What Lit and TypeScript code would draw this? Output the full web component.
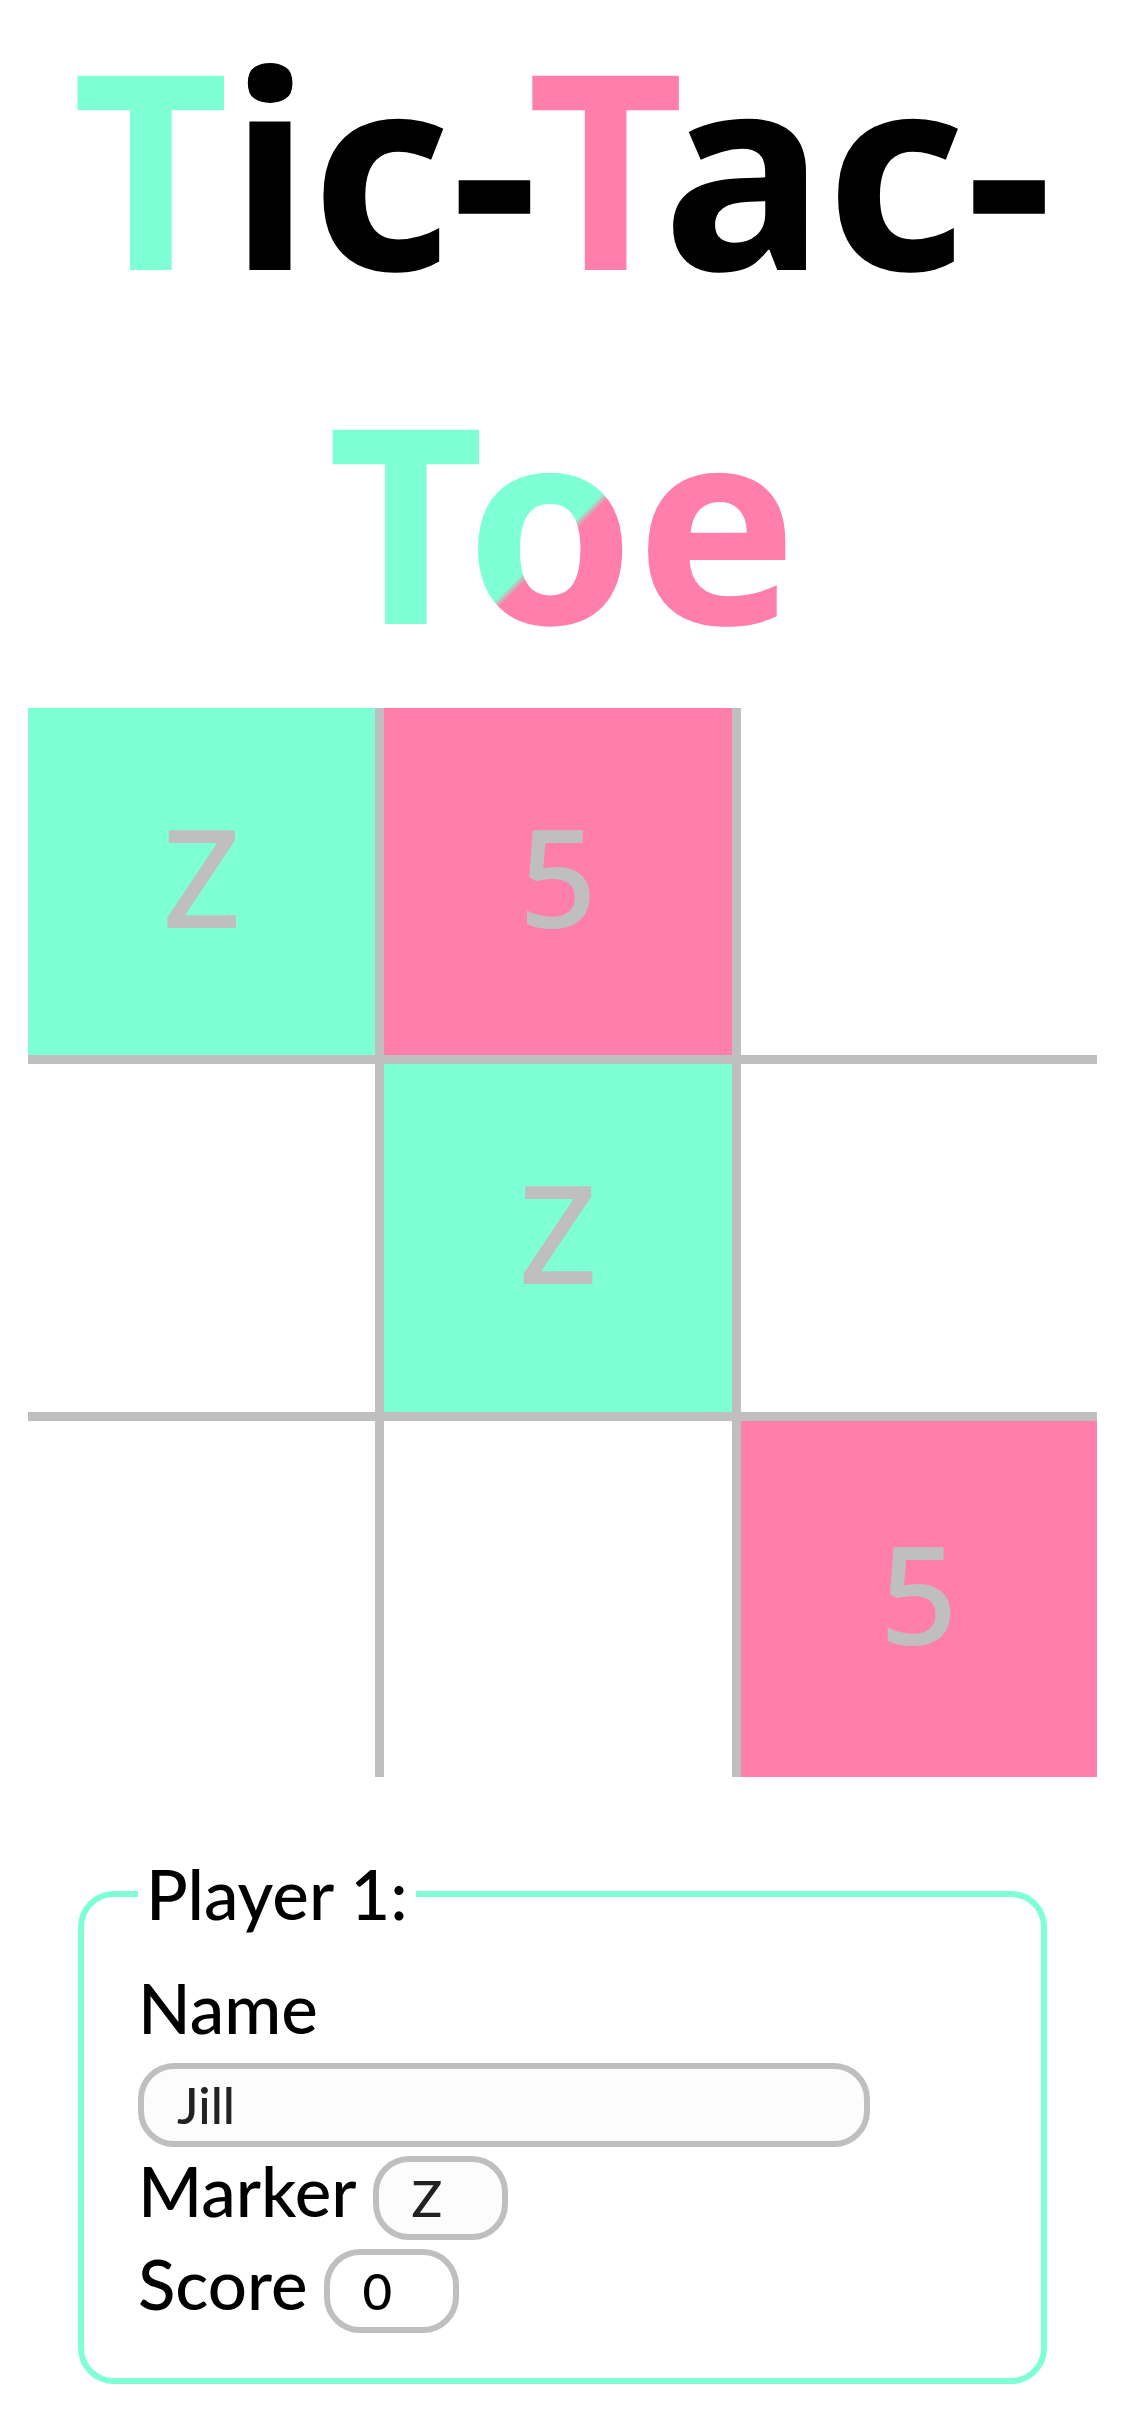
import { LitElement, html, css } from "lit";
import { customElement, property, state } from "lit/decorators.js";
import { classMap } from "lit/directives/class-map.js";

type Mark = 0 | 1 | 2;

interface Player {
  name: string;
  marker: string;
  score: number;
}

@customElement("game-title")
class GameTitle extends LitElement {
  static styles = css`
    :host {
      display: block;
    }
    .title {
      margin: -12px 0 12px;
      font-family: "Noto Sans", sans-serif;
      font-size: 272px;
      line-height: 354px;
      font-weight: 700;
      text-align: center;
      color: #000;
    }
    .one {
      color: #7fffd4;
    }
    .two {
      color: #ff7faa;
    }
    .both {
      color: transparent;
      background: linear-gradient(135deg, #7fffd4 55%, #ff7faa 57%);
      -webkit-background-clip: text;
      background-clip: text;
    }
  `;

  render() {
    return html`<h1 class="title"><span class="one">T</span>ic-<span class="two">T</span>ac-<br /><span class="one">T</span><span class="both">o</span><span class="two">e</span></h1>`;
  }
}

@customElement("game-board")
class GameBoard extends LitElement {
  static styles = css`
    :host {
      display: block;
    }
    .board {
      display: grid;
      grid-template-columns: repeat(3, 1fr);
      width: 95%;
      margin: 0 auto;
    }
    .cell {
      box-sizing: border-box;
      display: flex;
      align-items: center;
      justify-content: center;
      min-width: 0;
      aspect-ratio: 1;
      margin: 0;
      padding: 0 0 12px;
      border: 0 solid #bfbfbf;
      border-radius: 0;
      background: transparent;
      color: #bfbfbf;
      font-family: "Noto Sans", sans-serif;
      font-size: 136px;
      font-weight: 500;
      line-height: 1;
    }
    .right {
      border-right-width: 9px;
    }
    .bottom {
      border-bottom-width: 9px;
    }
    .one {
      background: #7fffd4;
    }
    .two {
      background: #ff7faa;
    }
  `;

  @property({ attribute: false }) cells: Mark[] = [];
  @property({ attribute: false }) markers: string[] = [];

  private pick(index: number) {
    this.dispatchEvent(new CustomEvent("pick", { detail: index }));
  }

  render() {
    return html`<div class="board">
      ${this.cells.map(
        (mark, i) => html`<button
          type="button"
          class=${classMap({
            cell: true,
            right: i % 3 < 2,
            bottom: i < 6,
            one: mark === 1,
            two: mark === 2,
          })}
          @click=${() => this.pick(i)}
        >${mark ? this.markers[mark - 1] : ""}</button>`
      )}
    </div>`;
  }
}

@customElement("player-card")
class PlayerCard extends LitElement {
  static styles = css`
    :host {
      display: block;
    }
    .card {
      min-width: 0;
      margin: 72px 78px 54px;
      padding: 22px 54px 45px;
      border: 6px solid #7fffd4;
      border-radius: 36px;
      font-family: Lato, sans-serif;
      font-size: 69px;
      font-weight: 500;
      color: #000;
    }
    .legend {
      padding: 0 8px;
      line-height: 90px;
    }
    .fields {
      display: flex;
      flex-direction: column;
      gap: 9px;
    }
    .row {
      display: flex;
      align-items: baseline;
      gap: 16px;
    }
    .label {
      line-height: 60px;
    }
    .heading {
      line-height: 93px;
    }
    .box {
      box-sizing: border-box;
      width: 135px;
      height: 84px;
      margin: 0;
      padding: 0 33px;
      border: 6px solid #bfbfbf;
      border-radius: 36px;
      background: #fcfcfc;
      color: #222;
      font-family: inherit;
      font-size: 51px;
      font-weight: 500;
    }
    .wide {
      width: 732px;
      max-width: 100%;
    }
    .score {
      background: #fff;
      color: #000;
    }
  `;

  @property({ attribute: false }) player: Player = { name: "", marker: "", score: 0 };

  render() {
    const { name, marker, score } = this.player;
    return html`<fieldset class="card">
      <legend class="legend">Player 1:</legend>
      <div class="fields">
        <label class="heading" for="name">Name</label>
        <input class="box wide" id="name" type="text" .value=${name} />
        <div class="row">
          <label class="label" for="marker">Marker</label>
          <input class="box" id="marker" type="text" maxlength="1" .value=${marker} />
        </div>
        <div class="row">
          <label class="label" for="score">Score</label>
          <input class="box score" id="score" type="text" readonly .value=${String(score)} />
        </div>
      </div>
    </fieldset>`;
  }
}

@customElement("app-root")
class AppRoot extends LitElement {
  static styles = css`
    :host {
      display: flow-root;
      background: #fff;
    }
  `;

  @state() private cells: Mark[] = [1, 2, 0, 0, 1, 0, 0, 0, 2];

  private play(e: CustomEvent<number>) {
    if (this.cells[e.detail]) return;
    const turn: Mark = this.cells.filter(Boolean).length % 2 ? 2 : 1;
    this.cells = this.cells.map((c, i) => (i === e.detail ? turn : c));
  }

  render() {
    return html`
      <game-title></game-title>
      <game-board .cells=${this.cells} .markers=${["Z", "5"]} @pick=${this.play}></game-board>
      <player-card .player=${{ name: "Jill", marker: "Z", score: 0 }}></player-card>
    `;
  }
}
